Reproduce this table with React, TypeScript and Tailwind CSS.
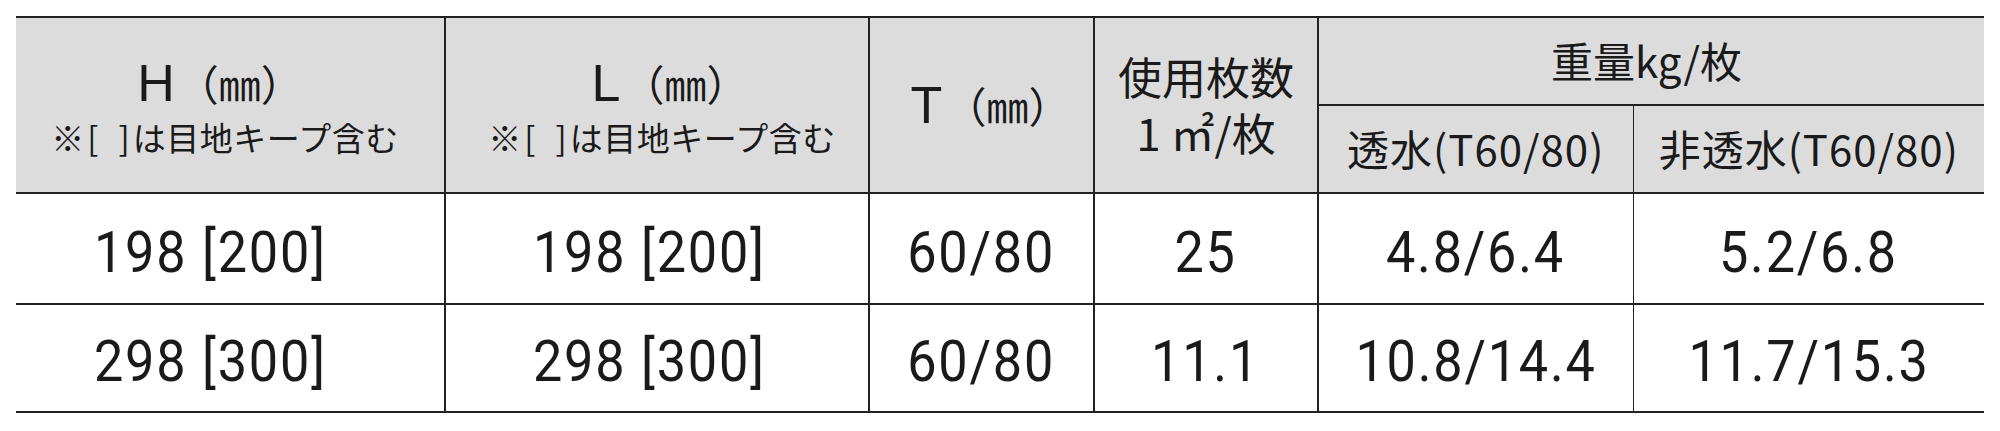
const JP = "font-['Noto_Sans_CJK_JP',sans-serif]";
const NUM = "font-['Roboto','Noto_Sans_CJK_JP',sans-serif]";

type Row = { h: string; l: string; t: string; count: string; permeable: string; solid: string };

const rows: Row[] = [
  { h: "198 [200]", l: "198 [200]", t: "60/80", count: "25", permeable: "4.8/6.4", solid: "5.2/6.8" },
  { h: "298 [300]", l: "298 [300]", t: "60/80", count: "11.1", permeable: "10.8/14.4", solid: "11.7/15.3" },
];

function SizeHead({ letter, titleShift }: { letter: string; titleShift: string }) {
  return (
    <div className="flex flex-col items-center leading-none text-[#1a1a1a]">
      <div className={`flex items-baseline ${titleShift}`}>
        <span className="font-['Liberation_Sans',sans-serif] text-[52px]">{letter}</span>
        <span className={`${JP} ml-[2px] text-[42px]`}>（㎜）</span>
      </div>
      <div className={`${JP} ml-[10px] mt-[12px] flex items-baseline text-[33px]`}>
        <span>※</span>
        <span className="ml-[3px]">[</span>
        <span className="ml-[20px]">]</span>
        <span className="ml-[3px] tracking-[0.5px]">は目地キープ含む</span>
      </div>
    </div>
  );
}

function Num({ children }: { children: string }) {
  return (
    <span className={`${NUM} inline-block scale-x-[0.9] pt-[6px] text-[58px] leading-none tracking-[2px]`}>
      {children}
    </span>
  );
}

export default function App() {
  const cell = "border-[#222] border-y-2 p-0 text-center align-middle";
  return (
    <div className="h-[431px] w-[2000px] bg-white pl-[16px] pt-[16px]">
      <table className="w-[1968px] table-fixed border-collapse text-[#1a1a1a]">
        <colgroup>
          <col className="w-[429px]" />
          <col className="w-[424px]" />
          <col className="w-[225px]" />
          <col className="w-[224px]" />
          <col className="w-[315px]" />
          <col className="w-[351px]" />
        </colgroup>
        <thead className="bg-[#dcdcdc]">
          <tr className="h-[88px]">
            <th rowSpan={2} className={`${cell} pr-[20px] font-normal`}>
              <SizeHead letter="H" titleShift="" />
            </th>
            <th rowSpan={2} className={`${cell} border-l-2 font-normal`}>
              <SizeHead letter="L" titleShift="ml-[26px]" />
            </th>
            <th rowSpan={2} className={`${cell} border-l-2 pl-[18px] font-normal`}>
              <span className="font-['Liberation_Sans',sans-serif] text-[52px] leading-none">T</span>
              <span className={`${JP} ml-[2px] text-[42px] leading-none`}>（㎜）</span>
            </th>
            <th rowSpan={2} className={`${cell} border-l-2 font-normal`}>
              <div className={`${JP} text-[44px] leading-[54px]`}>使用枚数</div>
              <div className={`${JP} text-[44px] leading-[58px]`}>1 ㎡/枚</div>
            </th>
            <th colSpan={2} className={`${cell} border-l-2 pr-[10px] font-normal`}>
              <span className={`${JP} text-[42px] leading-none`}>重量kg/枚</span>
            </th>
          </tr>
          <tr className="h-[88px]">
            <th className={`${cell} border-l-2 font-normal`}>
              <span className={`${JP} text-[42px] leading-none tracking-[1px]`}>透水(T60/80)</span>
            </th>
            <th className={`${cell} border-l-[1.5px] font-normal`}>
              <span className={`${JP} text-[42px] leading-none tracking-[1px]`}>非透水(T60/80)</span>
            </th>
          </tr>
        </thead>
        <tbody>
          {rows.map((r, i) => (
            <tr key={r.h} className={i === 0 ? "h-[111px]" : "h-[108px]"}>
              <td className={`${cell} pr-[40px]`}>
                <Num>{r.h}</Num>
              </td>
              <td className={`${cell} border-l-2 pr-[16px]`}>
                <Num>{r.l}</Num>
              </td>
              <td className={`${cell} border-l-2`}>
                <Num>{r.t}</Num>
              </td>
              <td className={`${cell} border-l-2`}>
                <Num>{r.count}</Num>
              </td>
              <td className={`${cell} border-l-2`}>
                <Num>{r.permeable}</Num>
              </td>
              <td className={`${cell} border-l-[1.5px]`}>
                <Num>{r.solid}</Num>
              </td>
            </tr>
          ))}
        </tbody>
      </table>
    </div>
  );
}
